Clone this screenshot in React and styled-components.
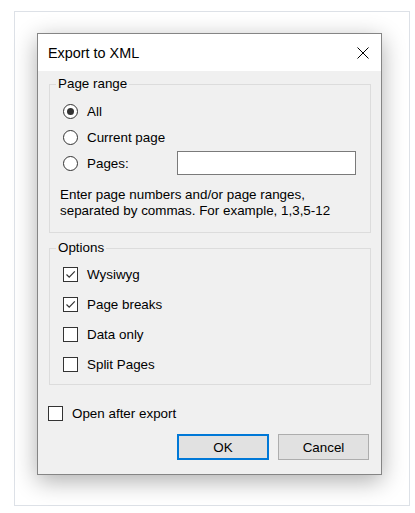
import React, { useState } from 'react';
import styled, { createGlobalStyle } from 'styled-components';

const GlobalStyle = createGlobalStyle`
  body {
    margin: 0;
    background: #ffffff;
    font-family: "Liberation Sans", Arial, sans-serif;
    font-size: 13.4px;
    color: #000000;
  }
`;

const Page = styled.div`
  padding: 11px 0 0 14px;
`;

const Frame = styled.div`
  width: 396px;
  height: 495px;
  box-sizing: border-box;
  border: 1px solid #dde1e7;
  padding: 21px 0 0 22px;
  background: #ffffff;
`;

const Dialog = styled.div`
  width: 345px;
  height: 442px;
  box-sizing: border-box;
  border: 1px solid #858585;
  background: #f0f0f0;
  box-shadow: 0 6px 22px rgba(0, 0, 0, 0.32);
  display: flex;
  flex-direction: column;
`;

const TitleBar = styled.div`
  height: 37px;
  flex: none;
  background: #ffffff;
  display: flex;
  align-items: center;
  justify-content: space-between;
  padding: 0 12px 0 10px;
`;

const Title = styled.span`
  font-size: 14.4px;
`;

const CloseButton = styled.button`
  width: 12px;
  height: 12px;
  padding: 0;
  border: none;
  background: none;
  display: flex;
  cursor: pointer;
`;

const Body = styled.div`
  flex: 1;
  display: flex;
  flex-direction: column;
  padding: 5px 10px 13px 10px;
`;

const Group = styled.fieldset`
  margin: ${(p) => (p.$gap ? '7px' : '0')} 0 0 1px;
  padding: ${(p) => p.$pad};
  border: 1px solid #dcdcdc;
  min-width: 0;
`;

const Legend = styled.legend`
  margin-left: 6px;
  padding: 0 2px;
  line-height: 16px;
`;

const Row = styled.label`
  display: flex;
  align-items: center;
  height: ${(p) => p.$h}px;
  padding-left: ${(p) => p.$indent || 0}px;
  margin-top: ${(p) => p.$top || 0}px;
  cursor: default;
`;

const Radio = styled.span`
  width: 15px;
  height: 15px;
  box-sizing: border-box;
  border: 1px solid #333333;
  border-radius: 50%;
  background: #ffffff;
  margin-right: 9px;
  flex: none;
  display: flex;
  align-items: center;
  justify-content: center;

  &::after {
    content: '';
    width: 7px;
    height: 7px;
    border-radius: 50%;
    background: ${(p) => (p.$checked ? '#333333' : 'transparent')};
  }
`;

const Box = styled.span`
  width: 15px;
  height: 15px;
  box-sizing: border-box;
  border: 1px solid #333333;
  background: #ffffff;
  margin-right: 9px;
  flex: none;
  display: flex;
  align-items: center;
  justify-content: center;
`;

const FieldLabel = styled.span`
  width: 90px;
`;

const TextInput = styled.input`
  width: 179px;
  height: 24px;
  box-sizing: border-box;
  border: 1px solid #7a7a7a;
  background: #ffffff;
  padding: 0 4px;
  font: inherit;
  outline: none;
`;

const Hint = styled.p`
  margin: 11px 0 0 10px;
  line-height: 16px;
`;

const ButtonRow = styled.div`
  display: flex;
  justify-content: flex-end;
  gap: 9px;
  margin: 6px 2px 0 0;
`;

const Button = styled.button`
  width: ${(p) => p.$w}px;
  height: 26px;
  box-sizing: border-box;
  background: #e1e1e1;
  border: ${(p) => (p.$primary ? '2px solid #0078d7' : '1px solid #adadad')};
  font: inherit;
  color: #000000;
  padding: 0;
  cursor: pointer;
`;

function Check({ checked }) {
  return (
    <Box>
      {checked && (
        <svg width="13" height="13" viewBox="0 0 13 13">
          <path d="M2.5 6.5 L5.2 9.2 L10.8 3.4" fill="none" stroke="#333" strokeWidth="1.2" />
        </svg>
      )}
    </Box>
  );
}

export default function App() {
  const [range, setRange] = useState('all');
  const [opts, setOpts] = useState({ wysiwyg: true, breaks: true, data: false, split: false, open: false });
  const toggle = (k) => setOpts((o) => ({ ...o, [k]: !o[k] }));

  return (
    <Page>
      <GlobalStyle />
      <Frame>
        <Dialog>
          <TitleBar>
            <Title>Export to XML</Title>
            <CloseButton aria-label="Close">
              <svg width="12" height="12" viewBox="0 0 12 12">
                <path d="M0.5 0.5 L11.5 11.5 M11.5 0.5 L0.5 11.5" stroke="#000" strokeWidth="1" />
              </svg>
            </CloseButton>
          </TitleBar>
          <Body>
            <Group $pad="6px 10px 13px 0">
              <Legend>Page range</Legend>
              <Row $h={26} $indent={13} onClick={() => setRange('all')}>
                <Radio $checked={range === 'all'} />
                All
              </Row>
              <Row $h={26} $indent={13} onClick={() => setRange('current')}>
                <Radio $checked={range === 'current'} />
                Current page
              </Row>
              <Row $h={26} $indent={13} onClick={() => setRange('pages')}>
                <Radio $checked={range === 'pages'} />
                <FieldLabel>Pages:</FieldLabel>
                <TextInput type="text" />
              </Row>
              <Hint>
                Enter page numbers and/or page ranges,
                <br />
                separated by commas. For example, 1,3,5-12
              </Hint>
            </Group>
            <Group $gap $pad="3px 10px 5px 0">
              <Legend>Options</Legend>
              <Row $h={30} $indent={13} onClick={() => toggle('wysiwyg')}>
                <Check checked={opts.wysiwyg} />
                Wysiwyg
              </Row>
              <Row $h={30} $indent={13} onClick={() => toggle('breaks')}>
                <Check checked={opts.breaks} />
                Page breaks
              </Row>
              <Row $h={30} $indent={13} onClick={() => toggle('data')}>
                <Check checked={opts.data} />
                Data only
              </Row>
              <Row $h={30} $indent={13} onClick={() => toggle('split')}>
                <Check checked={opts.split} />
                Split Pages
              </Row>
            </Group>
            <Row $h={30} $top={13} onClick={() => toggle('open')}>
              <Check checked={opts.open} />
              Open after export
            </Row>
            <ButtonRow>
              <Button $w={92} $primary>OK</Button>
              <Button $w={91}>Cancel</Button>
            </ButtonRow>
          </Body>
        </Dialog>
      </Frame>
    </Page>
  );
}
